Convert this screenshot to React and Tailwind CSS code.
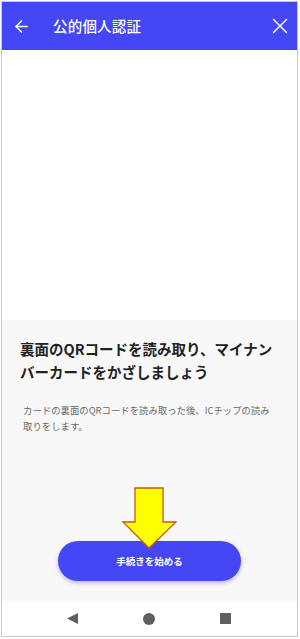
import React from "react";
import { ArrowLeft, X } from "lucide-react";

const JP = { fontFamily: '"Noto Sans CJK JP", "Noto Sans", sans-serif' };

// 下向きの黄色い矢印（ボタンを指す注釈）
function PointerArrow() {
  return (
    <svg
      className="absolute left-[120px] top-[485px]"
      width="60"
      height="66"
      viewBox="0 0 60 66"
    >
      <polygon
        points="15,3 43,3 43,37 56,37 29,63 3,37 15,37"
        fill="#ffff00"
        stroke="#c25e00"
        strokeWidth="1.3"
        strokeLinejoin="miter"
      />
    </svg>
  );
}

export default function App() {
  return (
    <div className="w-[300px] h-[639px] bg-white relative overflow-hidden" style={JP}>
      <div className="ml-px mt-px w-[297px] h-[636px] border border-[#cacaca] flex flex-col">
        {/* ヘッダー */}
        <header className="h-[48px] bg-[#4447f3] flex items-center text-white shrink-0">
          <ArrowLeft size={19} strokeWidth={1.8} className="ml-[10px]" />
          <h1 className="ml-[22px] text-[14.5px] font-medium tracking-[0.2px]">公的個人認証</h1>
          <X size={26} strokeWidth={1.3} className="ml-auto mr-[4px]" />
        </header>

        {/* カメラ領域 */}
        <div className="h-[270px] bg-white shrink-0" />

        {/* 説明 */}
        <div className="flex-1 bg-[#f8f8f8] flex flex-col">
          <h2 className="pt-[17px] px-[18px] text-[14.5px] leading-[23px] font-bold text-[#222222]">
            裏面のQRコードを読み取り、マイナンバーカードをかざしましょう
          </h2>
          <p className="mt-[19px] pl-[21px] pr-[20px] text-[9.4px] leading-[16px] text-[#6a6a6a]">
            カードの裏面のQRコードを読み取った後、ICチップの読み取りをします。
          </p>
          <div className="flex-1" />
          <div className="flex justify-center mb-[20px]">
            <button className="w-[183px] h-[40px] rounded-full bg-[#4447f3] text-white text-[9.5px] font-bold shadow-[0_2px_4px_rgba(60,64,220,0.35)]">
              手続きを始める
            </button>
          </div>
        </div>

        {/* ナビゲーションバー */}
        <nav className="h-[35px] bg-white shrink-0 flex items-center">
          <div className="w-[11px] ml-[65px] h-[11px] flex items-center">
            <svg width="11" height="11" viewBox="0 0 11 11">
              <polygon points="11,0 11,11 0,5.5" fill="#5f5f5f" />
            </svg>
          </div>
          <div className="ml-[65px] w-[12px] h-[12px] rounded-full bg-[#5f5f5f]" />
          <div className="ml-[65px] w-[11px] h-[11px] bg-[#5f5f5f]" />
        </nav>
      </div>

      <PointerArrow />
    </div>
  );
}
